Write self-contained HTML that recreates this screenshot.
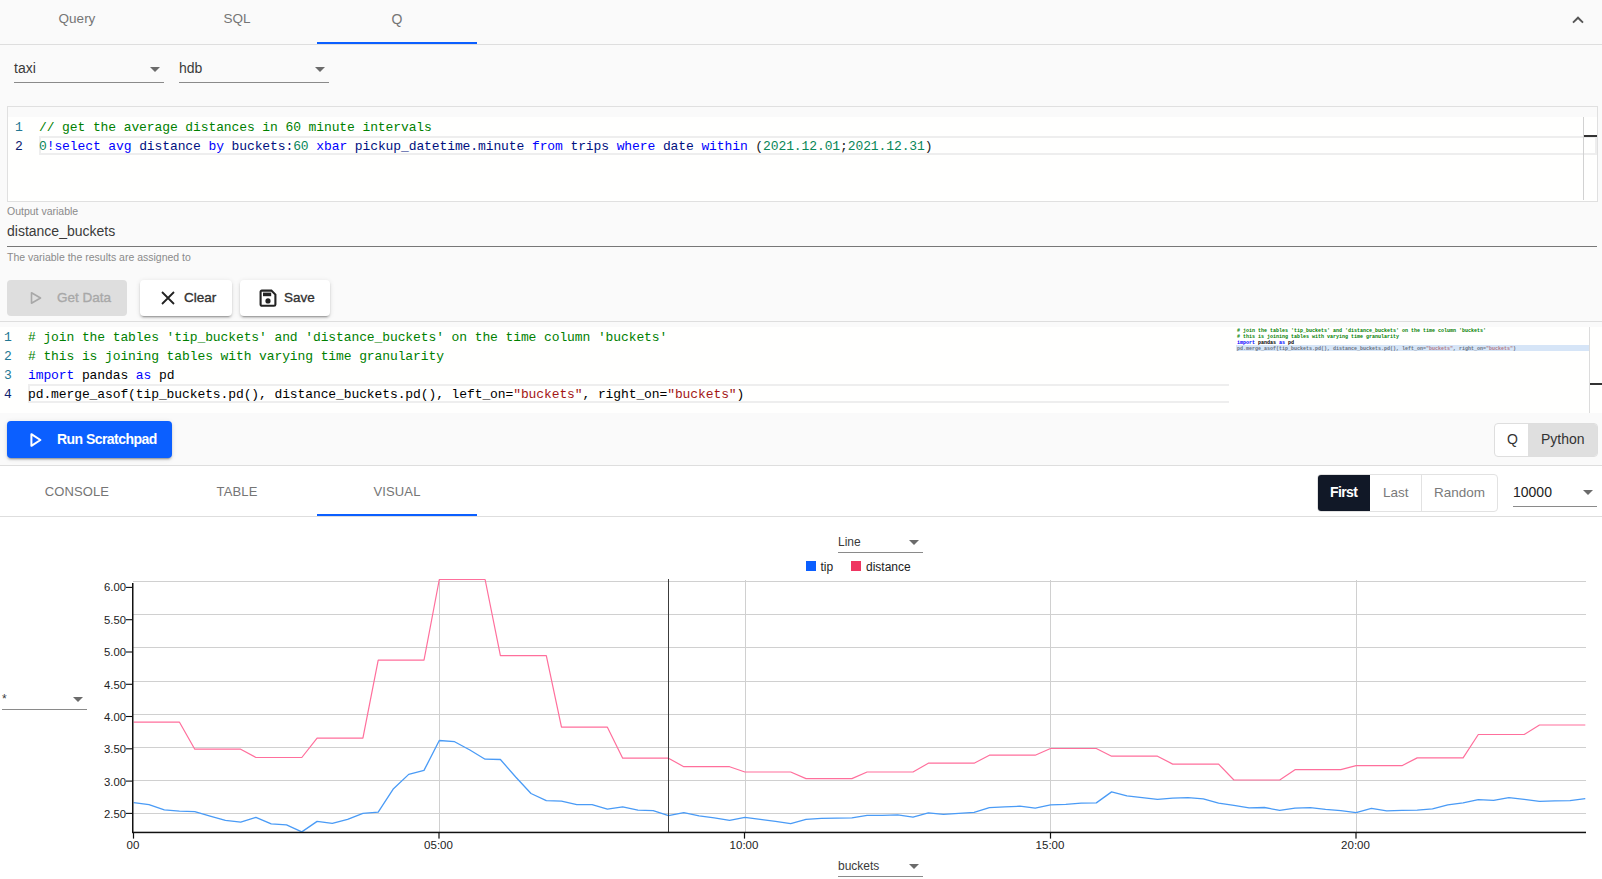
<!DOCTYPE html>
<html><head><meta charset="utf-8"><title>Scratchpad</title>
<style>
*{box-sizing:border-box;margin:0;padding:0}
html,body{width:1602px;height:879px;overflow:hidden;background:#fff}
body{font-family:"Liberation Sans",sans-serif;color:#333;position:relative;font-size:14px}
.abs{position:absolute}
.top{left:0;top:0;width:1602px;height:466px;background:#fafafa}
.hline{position:absolute;left:0;width:1602px;height:1px;background:#dedede}
.tab{position:absolute;width:160px;text-align:center;color:#757575;font-size:14px;line-height:16px}
.ul{position:absolute;height:2px;background:#0b5fff}
.sel{position:absolute;border-bottom:1px solid #8a8a8a;font-size:14px;color:#3a3a3a}
.sel span{position:absolute;left:0}
.tri{position:absolute;width:0;height:0;border-left:5px solid transparent;border-right:5px solid transparent;border-top:5px solid #6b6b6b}
.mono{font-family:"Liberation Mono","DejaVu Sans Mono",monospace;font-size:13px;letter-spacing:-0.1px;white-space:pre;line-height:19px;margin-top:1px}
.ln{position:absolute;color:#237893}
.cl{position:absolute;color:#000}
.b{color:#222}.c{color:#008000}.k{color:#0000ff}.n{color:#098658}.s{color:#a31515}
.btn{position:absolute;height:36px;border-radius:4px;font-size:13.5px;line-height:36px;font-weight:normal;-webkit-text-stroke:0.35px currentColor}
.sh{box-shadow:0 3px 1px -2px rgba(0,0,0,.2),0 2px 2px 0 rgba(0,0,0,.14),0 1px 5px 0 rgba(0,0,0,.12)}
.small{position:absolute;font-size:11px;color:#8a8a8a}
.mm{font-family:"Liberation Mono",monospace;font-size:5px;line-height:6px;font-weight:bold;color:#000}.mm div{white-space:pre;height:6px}
</style></head><body>
<div class="abs top"></div>

<!-- top tabs -->
<div class="tab" style="left:-3px;top:11px;font-size:13.5px">Query</div>
<div class="tab" style="left:157px;top:11px;font-size:13.5px">SQL</div>
<div class="tab" style="left:317px;top:11px">Q</div>
<div class="ul" style="left:317px;top:42px;width:160px"></div>
<div class="hline" style="top:44px"></div>
<svg class="abs" style="left:1570px;top:12px" width="16" height="16" viewBox="0 0 16 16"><path d="M3 10.6 L8 5.7 L13 10.6" fill="none" stroke="#555" stroke-width="1.9"/></svg>

<!-- selects -->
<div class="sel" style="left:14px;top:56px;width:150px;height:27px"><span style="top:4px">taxi</span><i class="tri" style="right:4px;top:11px"></i></div>
<div class="sel" style="left:179px;top:56px;width:150px;height:27px"><span style="top:4px">hdb</span><i class="tri" style="right:4px;top:11px"></i></div>

<!-- editor 1 -->
<div class="abs" style="left:7px;top:106px;width:1591px;height:96px;border:1px solid #e0e0e0;background:#fafafa"></div>
<div class="abs" style="left:8px;top:117px;width:1589px;height:84px;background:#fffffe"></div>
<div class="abs" style="left:39px;top:136px;width:1558px;height:19px;border:2px solid #eeeeee"></div>
<div class="abs" style="left:1583px;top:117px;width:1px;height:83px;background:#d2d2d2"></div>
<div class="abs" style="left:1584px;top:135px;width:13px;height:2px;background:#333"></div>
<div class="mono ln" style="left:15px;top:117px">1</div>
<div class="mono ln" style="left:15px;top:136px;color:#0b216f">2</div>
<div class="mono cl c" style="left:39px;top:117px">// get the average distances in 60 minute intervals</div>
<div class="mono cl" style="left:39px;top:136px;color:#001080"><span class="n">0</span><span class="k">!select</span> <span class="k">avg</span> distance <span class="k">by</span> buckets:<span class="n">60</span> <span class="k">xbar</span> pickup_datetime.minute <span class="k">from</span> trips <span class="k">where</span> date <span class="k">within</span> <span class="b">(</span><span class="n">2021.12.01</span><span class="b">;</span><span class="n">2021.12.31</span><span class="b">)</span></div>

<!-- output variable -->
<div class="small" style="left:7px;top:205px;font-size:10.5px">Output variable</div>
<div class="abs" style="left:7px;top:223px;font-size:14px;color:#3a3a3a">distance_buckets</div>
<div class="abs" style="left:7px;top:246px;width:1590px;height:1px;background:#777"></div>
<div class="small" style="left:7px;top:251px;font-size:10.5px">The variable the results are assigned to</div>

<!-- buttons -->
<div class="btn" style="left:7px;top:280px;width:120px;background:#dedede;color:#a8a8a8">
  <svg class="abs" style="left:22px;top:11px" width="14" height="14" viewBox="0 0 14 14"><path d="M2.5 1.8 L11.5 7 L2.5 12.2 Z" fill="none" stroke="#a8a8a8" stroke-width="1.6" stroke-linejoin="round"/></svg>
  <span class="abs" style="left:50px;top:0">Get Data</span></div>
<div class="btn sh" style="left:140px;top:280px;width:92px;background:#fff;color:#333">
  <svg class="abs" style="left:20px;top:10px" width="16" height="16" viewBox="0 0 16 16"><path d="M2 2 L14 14 M14 2 L2 14" stroke="#222" stroke-width="1.8" fill="none"/></svg>
  <span class="abs" style="left:44px;top:0">Clear</span></div>
<div class="btn sh" style="left:240px;top:280px;width:90px;background:#fff;color:#333">
  <svg class="abs" style="left:19px;top:9px" width="18" height="19" viewBox="0 0 18 19"><path d="M2.8 1.6 H12.4 L16.4 5.6 V15.4 A1.4 1.4 0 0 1 15 16.8 H3 A1.4 1.4 0 0 1 1.6 15.4 V2.8 A1.2 1.2 0 0 1 2.8 1.6 Z" fill="none" stroke="#222" stroke-width="2.1"/><rect x="4" y="3.6" width="8.2" height="3.6" fill="#222"/><circle cx="9" cy="11.9" r="2.6" fill="#222"/></svg>
  <span class="abs" style="left:44px;top:0">Save</span></div>
<div class="hline" style="top:321px"></div>

<!-- editor 2 -->
<div class="abs" style="left:0;top:327px;width:1602px;height:86px;background:#fffffe"></div>
<div class="abs" style="left:28px;top:384px;width:1201px;height:19px;border:2px solid #eeeeee;border-right:none"></div>
<div class="mono ln" style="left:4px;top:327px">1</div>
<div class="mono ln" style="left:4px;top:346px">2</div>
<div class="mono ln" style="left:4px;top:365px">3</div>
<div class="mono ln" style="left:4px;top:384px;color:#0b216f">4</div>
<div class="mono cl c" style="left:28px;top:327px"># join the tables 'tip_buckets' and 'distance_buckets' on the time column 'buckets'</div>
<div class="mono cl c" style="left:28px;top:346px"># this is joining tables with varying time granularity</div>
<div class="mono cl" style="left:28px;top:365px"><span class="k">import</span> pandas <span class="k">as</span> pd</div>
<div class="mono cl" style="left:28px;top:384px">pd.merge_asof(tip_buckets.pd(), distance_buckets.pd(), left_on=<span class="s">"buckets"</span>, right_on=<span class="s">"buckets"</span>)</div>
<!-- minimap -->
<div class="abs" style="left:1236px;top:345px;width:353px;height:6px;background:#d6e5f7"></div>
<div class="abs mm" style="left:1237px;top:328px">
<div class="c"># join the tables 'tip_buckets' and 'distance_buckets' on the time column 'buckets'</div>
<div class="c"># this is joining tables with varying time granularity</div>
<div><span class="k">import</span> pandas <span class="k">as</span> pd</div>
<div style="color:#6a7280">pd.merge_asof(tip_buckets.pd(), distance_buckets.pd(), left_on=<span style="color:#b07a8a">"buckets"</span>, right_on=<span style="color:#b07a8a">"buckets"</span>)</div>
</div>
<div class="abs" style="left:1589px;top:327px;width:1px;height:86px;background:#dcdcdc"></div>
<div class="abs" style="left:1590px;top:383px;width:12px;height:2px;background:#333"></div>

<!-- run -->
<div class="btn sh" style="left:7px;top:421px;width:165px;height:37px;line-height:37px;background:#0b5fff;color:#fff;font-weight:bold;font-size:14px;letter-spacing:-0.55px;-webkit-text-stroke:0">
  <svg class="abs" style="left:22px;top:11px" width="14" height="16" viewBox="0 0 14 16"><path d="M2.4 2.2 L11.4 8 L2.4 13.8 Z" fill="none" stroke="#fff" stroke-width="2" stroke-linejoin="round"/></svg>
  <span class="abs" style="left:50px;top:0">Run Scratchpad</span></div>
<div class="abs" style="left:1494px;top:423px;width:104px;height:34px;border:1px solid #dedede;border-radius:4px;background:#fff;overflow:hidden">
  <div class="abs" style="left:33px;top:0;width:70px;height:32px;background:#dfdfdf"></div>
  <span class="abs" style="left:12px;top:7px;font-size:14px;color:#333">Q</span>
  <span class="abs" style="left:46px;top:7px;font-size:14px;color:#333">Python</span>
</div>
<div class="hline" style="top:465px"></div>

<!-- bottom tabs -->
<div class="tab" style="left:-3px;top:484px;font-size:13px;letter-spacing:.1px">CONSOLE</div>
<div class="tab" style="left:157px;top:484px;font-size:13px;letter-spacing:.15px">TABLE</div>
<div class="tab" style="left:317px;top:484px;font-size:13px;letter-spacing:.15px">VISUAL</div>
<div class="ul" style="left:317px;top:514px;width:160px"></div>
<div class="hline" style="top:516px"></div>

<div class="abs" style="left:1317px;top:474px;width:181px;height:38px;border:1px solid #e2e2e2;border-radius:4px;background:#fff;overflow:hidden">
  <div class="abs" style="left:-1px;top:-1px;width:53px;height:38px;background:#111827;border-radius:4px 0 0 4px"></div>
  <div class="abs" style="left:103px;top:0;width:1px;height:36px;background:#e2e2e2"></div>
  <span class="abs" style="left:12px;top:9px;font-size:14px;letter-spacing:-0.6px;color:#fff;font-weight:bold">First</span>
  <span class="abs" style="left:65px;top:10px;font-size:13.5px;color:#7a7a7a">Last</span>
  <span class="abs" style="left:116px;top:10px;font-size:13.5px;color:#7a7a7a">Random</span>
</div>
<div class="sel" style="left:1513px;top:478px;width:84px;height:29px"><span style="top:6px;color:#222">10000</span><i class="tri" style="right:4px;top:12px"></i></div>

<!-- chart -->
<div class="sel" style="left:838px;top:532px;width:85px;height:21px;font-size:12px"><span style="top:3px">Line</span><i class="tri" style="right:4px;top:8px"></i></div>
<div class="sel" style="left:838px;top:856px;width:85px;height:21px;font-size:12px"><span style="top:3px">buckets</span><i class="tri" style="right:4px;top:8px"></i></div>
<div class="sel" style="left:2px;top:689px;width:85px;height:21px;font-size:12px"><span style="top:3px">*</span><i class="tri" style="right:4px;top:8px"></i></div>

<svg class="abs" style="left:0;top:520px" width="1602" height="359" viewBox="0 520 1602 359" font-family="Liberation Sans, sans-serif" font-size="12" fill="#222">
  <rect x="806" y="561" width="10" height="10" fill="#0b5fff"/>
  <text x="820.5" y="570.6">tip</text>
  <rect x="851" y="561" width="10" height="10" fill="#ef3561"/>
  <text x="866" y="570.6">distance</text>
  <g stroke="#d0d0d0" stroke-width="1" shape-rendering="crispEdges">
    <line x1="133" x2="1586" y1="581.5" y2="581.5"/><line x1="133" x2="1586" y1="614.5" y2="614.5"/><line x1="133" x2="1586" y1="647.5" y2="647.5"/><line x1="133" x2="1586" y1="681.5" y2="681.5"/>
    <line x1="133" x2="1586" y1="714.5" y2="714.5"/><line x1="133" x2="1586" y1="747.5" y2="747.5"/><line x1="133" x2="1586" y1="780.5" y2="780.5"/><line x1="133" x2="1586" y1="813.5" y2="813.5"/>
    <line x1="439.5" x2="439.5" y1="580" y2="832"/><line x1="745.5" x2="745.5" y1="580" y2="832"/><line x1="1050.5" x2="1050.5" y1="580" y2="832"/><line x1="1356.5" x2="1356.5" y1="580" y2="832"/>
  </g>
  <polyline fill="none" stroke="#ff6f9c" stroke-width="1.2" stroke-linejoin="round" points="133.7,722.2 149.0,722.2 164.3,722.2 179.5,722.2 194.8,749.2 210.1,749.2 225.4,749.2 240.7,749.2 255.9,757.5 271.2,757.5 286.5,757.5 301.8,757.5 317.1,738.2 332.3,738.2 347.6,738.2 362.9,738.2 378.2,660.1 393.5,660.1 408.7,660.1 424.0,660.1 439.3,579.5 454.6,579.5 469.9,579.5 485.1,579.5 500.4,655.6 515.7,655.6 531.0,655.6 546.3,655.6 561.5,727.2 576.8,727.2 592.1,727.2 607.4,727.2 622.7,758.2 637.9,758.2 653.2,758.2 668.5,758.2 683.8,766.7 699.1,766.7 714.3,766.7 729.6,766.7 744.9,772.0 760.2,772.0 775.5,772.0 790.7,772.0 806.0,778.6 821.3,778.6 836.6,778.6 851.9,778.6 867.1,772.0 882.4,772.0 897.7,772.0 913.0,772.0 928.3,763.2 943.5,763.2 958.8,763.2 974.1,763.2 989.4,755.2 1004.7,755.2 1019.9,755.2 1035.2,755.2 1050.5,748.5 1065.8,748.5 1081.1,748.5 1096.3,748.5 1111.6,756.2 1126.9,756.2 1142.2,756.2 1157.5,756.2 1172.7,764.1 1188.0,764.1 1203.3,764.1 1218.6,764.1 1233.9,780.0 1249.1,780.0 1264.4,780.0 1279.7,780.0 1295.0,769.7 1310.3,769.7 1325.5,769.7 1340.8,769.7 1356.1,765.7 1371.4,765.7 1386.7,765.7 1401.9,765.7 1417.2,757.9 1432.5,757.9 1447.8,757.9 1463.1,757.9 1478.3,734.5 1493.6,734.5 1508.9,734.5 1524.2,734.5 1539.5,725.0 1554.7,725.0 1570.0,725.0 1585.3,725.0"/>
  <polyline fill="none" stroke="#4a9bf6" stroke-width="1.3" stroke-linejoin="round" points="133.7,802.7 149.0,804.7 164.3,809.9 179.5,811.1 194.8,811.6 210.1,816.1 225.4,820.4 240.7,822.1 255.9,817.4 271.2,823.9 286.5,824.9 301.8,831.9 317.1,821.4 332.3,823.4 347.6,819.4 362.9,813.4 378.2,812.1 393.5,788.7 408.7,774.4 424.0,770.4 439.3,740.5 454.6,741.7 469.9,750.0 485.1,759.2 500.4,759.5 515.7,777.0 531.0,793.5 546.3,800.7 561.5,801.2 576.8,804.7 592.1,804.7 607.4,809.2 622.7,806.9 637.9,810.1 653.2,810.6 668.5,815.6 683.8,812.6 699.1,815.9 714.3,817.9 729.6,820.4 744.9,817.4 760.2,819.4 775.5,821.4 790.7,823.6 806.0,819.4 821.3,818.4 836.6,818.1 851.9,817.9 867.1,815.4 882.4,815.4 897.7,814.9 913.0,817.1 928.3,812.9 943.5,814.4 958.8,813.4 974.1,812.4 989.4,807.7 1004.7,806.9 1019.9,806.2 1035.2,808.2 1050.5,804.9 1065.8,804.4 1081.1,803.2 1096.3,802.9 1111.6,791.9 1126.9,795.9 1142.2,797.7 1157.5,799.4 1172.7,798.2 1188.0,797.7 1203.3,798.9 1218.6,803.2 1233.9,805.4 1249.1,807.9 1264.4,807.5 1279.7,810.4 1295.0,808.1 1310.3,807.6 1325.5,809.4 1340.8,810.6 1356.1,812.6 1371.4,808.4 1386.7,810.9 1401.9,810.4 1417.2,810.1 1432.5,808.9 1447.8,804.9 1463.1,802.9 1478.3,799.6 1493.6,800.4 1508.9,797.6 1524.2,799.4 1539.5,801.4 1554.7,800.9 1570.0,800.6 1585.3,798.6"/>
  <line x1="668.5" x2="668.5" y1="579" y2="832" stroke="#3c3c3c" stroke-width="1" shape-rendering="crispEdges"/>
  <g fill="#111">
    <rect x="132" y="583" width="1.5" height="250"/>
    <rect x="132" y="831.7" width="1454" height="1.5"/>
    <rect x="126" y="586.85" width="6.5" height="1.1"/>
    <rect x="126" y="619.15" width="6.5" height="1.1"/>
    <rect x="126" y="651.45" width="6.5" height="1.1"/>
    <rect x="126" y="683.75" width="6.5" height="1.1"/>
    <rect x="126" y="715.95" width="6.5" height="1.1"/>
    <rect x="126" y="748.25" width="6.5" height="1.1"/>
    <rect x="126" y="780.55" width="6.5" height="1.1"/>
    <rect x="126" y="812.85" width="6.5" height="1.1"/>
    <rect x="132.9" y="833" width="1.2" height="5.6"/>
    <rect x="438.4" y="833" width="1.2" height="5.6"/>
    <rect x="743.9" y="833" width="1.2" height="5.6"/>
    <rect x="1049.9" y="833" width="1.2" height="5.6"/>
    <rect x="1355.4" y="833" width="1.2" height="5.6"/>
  </g>
  <g text-anchor="end" font-size="11.3">
    <text x="126" y="591">6.00</text><text x="126" y="623.5">5.50</text><text x="126" y="656">5.00</text><text x="126" y="688.5">4.50</text>
    <text x="126" y="721">4.00</text><text x="126" y="753">3.50</text><text x="126" y="785.5">3.00</text><text x="126" y="818">2.50</text>
  </g>
  <g text-anchor="middle" font-size="11.5">
    <text x="133" y="849">00</text><text x="438.5" y="849">05:00</text><text x="744" y="849">10:00</text><text x="1050" y="849">15:00</text><text x="1355.5" y="849">20:00</text>
  </g>
</svg>
</body></html>
